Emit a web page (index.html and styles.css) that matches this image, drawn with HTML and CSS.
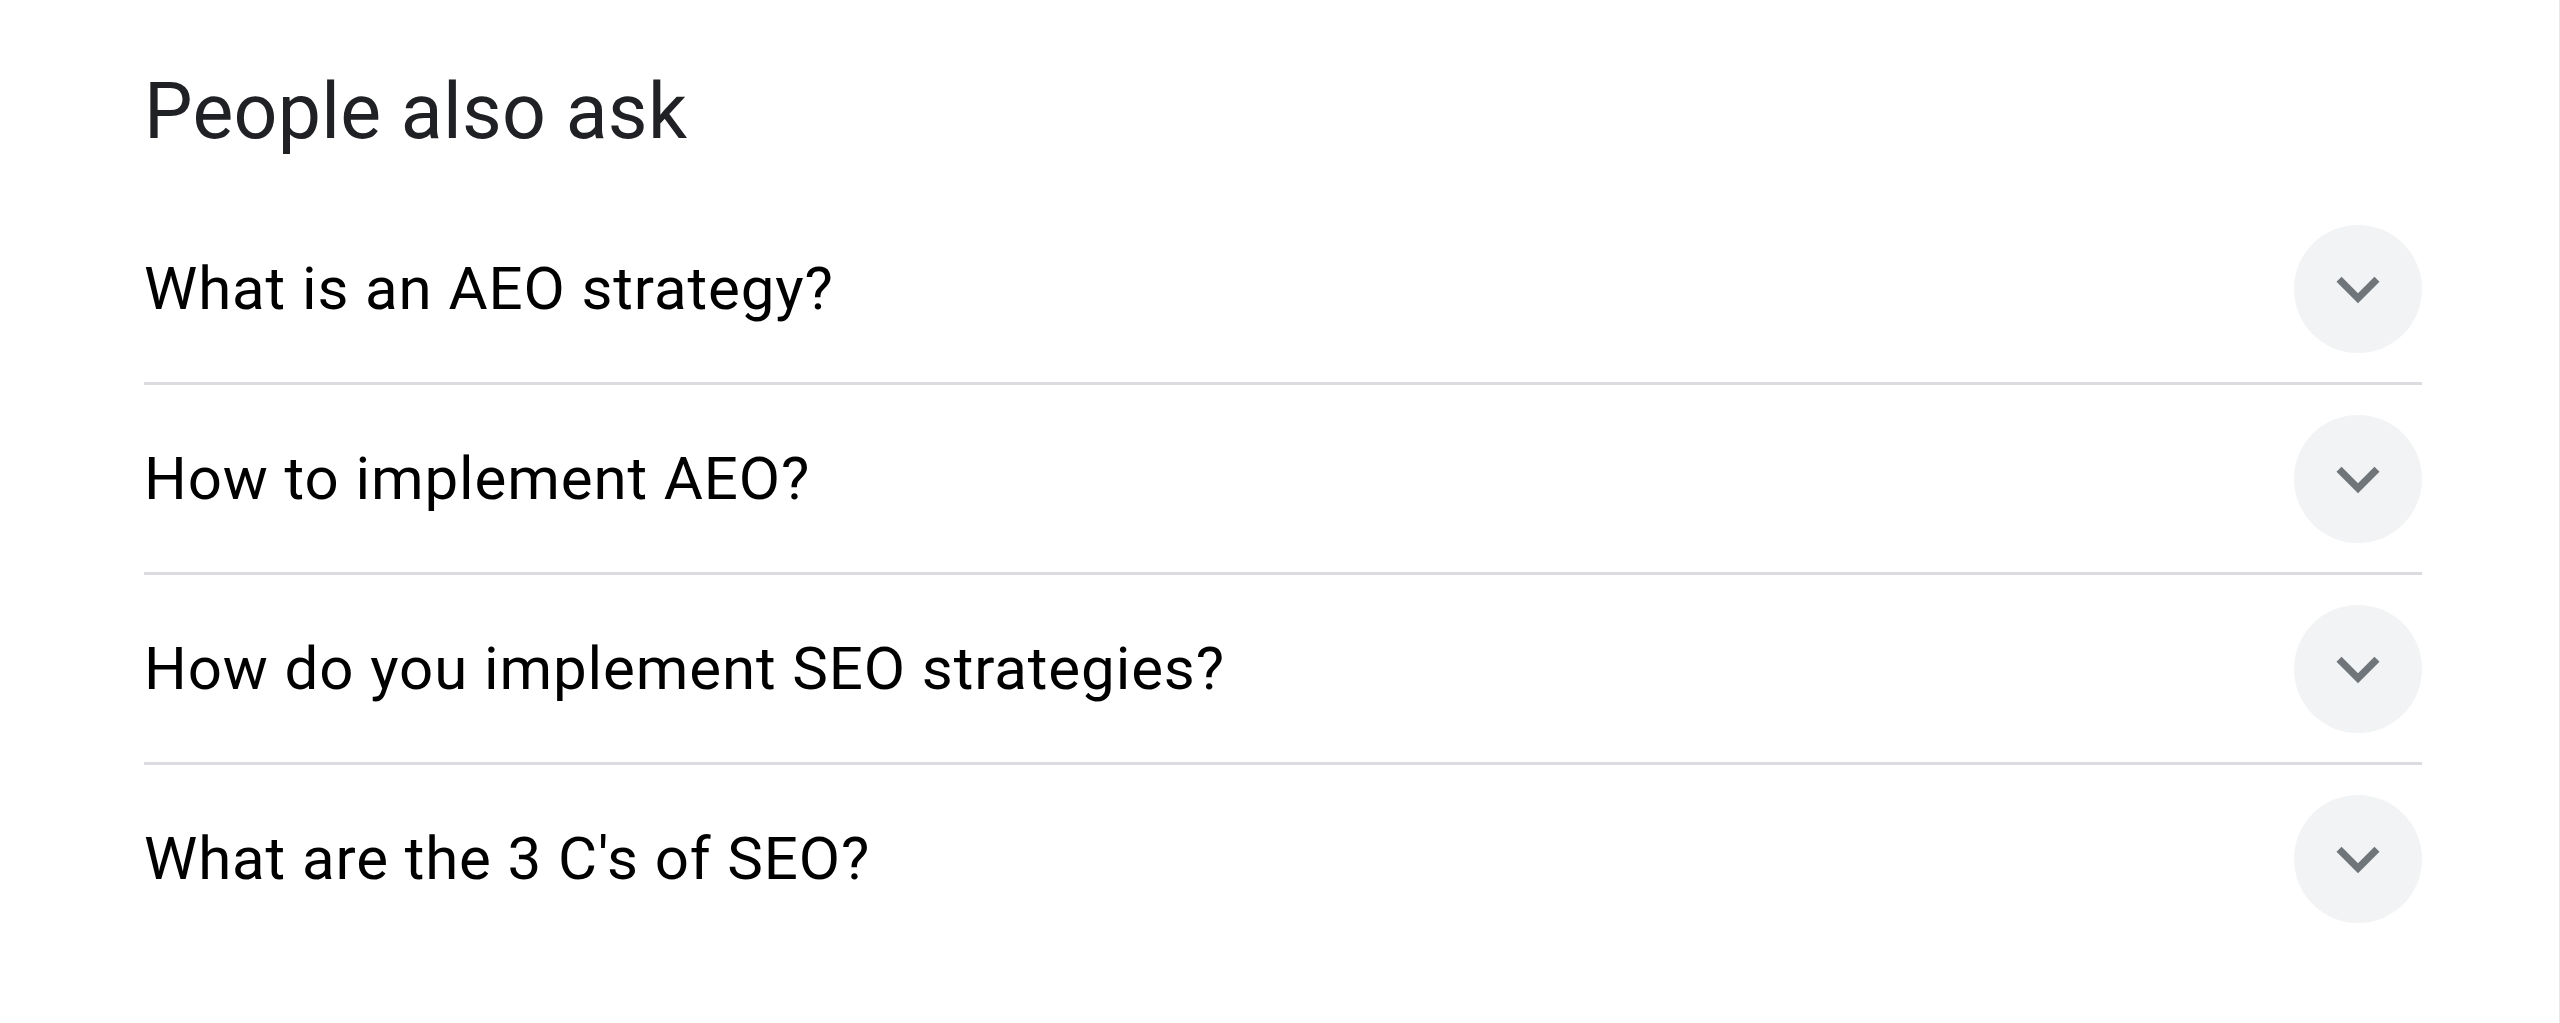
FILE: index.html
```html
<!DOCTYPE html>
<html lang="en">
<head>
    <meta charset="UTF-8">
    <meta name="viewport" content="width=device-width, initial-scale=1.0">
    <title>People also ask</title>
    <link rel="stylesheet" href="styles.css">
</head>
<body>
    <div class="paa">
        <h2 class="paa-title">People also ask</h2>
        <div class="paa-list">
            <div class="paa-row">
                <span class="paa-question">What is an AEO strategy?</span>
                <span class="paa-toggle">
                    <svg viewBox="0 0 24 24"><path d="M16.59 8.59L12 13.17 7.41 8.59 6 10l6 6 6-6z"/></svg>
                </span>
            </div>
            <div class="paa-row">
                <span class="paa-question">How to implement AEO?</span>
                <span class="paa-toggle">
                    <svg viewBox="0 0 24 24"><path d="M16.59 8.59L12 13.17 7.41 8.59 6 10l6 6 6-6z"/></svg>
                </span>
            </div>
            <div class="paa-row">
                <span class="paa-question">How do you implement SEO strategies?</span>
                <span class="paa-toggle">
                    <svg viewBox="0 0 24 24"><path d="M16.59 8.59L12 13.17 7.41 8.59 6 10l6 6 6-6z"/></svg>
                </span>
            </div>
            <div class="paa-row">
                <span class="paa-question">What are the 3 C's of SEO?</span>
                <span class="paa-toggle">
                    <svg viewBox="0 0 24 24"><path d="M16.59 8.59L12 13.17 7.41 8.59 6 10l6 6 6-6z"/></svg>
                </span>
            </div>
        </div>
    </div>
</body>
</html>
```

FILE: styles.css
```css
body {
    font-family: Roboto, "Liberation Sans", sans-serif;
    margin: 0;
    background: #fff;
    height: 1023px;
    border-right: 1px solid #e8e8e8;
    box-sizing: border-box;
}
.paa {
    width: 2278px;
    padding: 66px 0 0 144px;
}
.paa-title {
    margin: 0 0 37px;
    font-size: 77px;
    font-weight: 400;
    line-height: 1.2;
    letter-spacing: 0.3px;
    color: #202124;
}
.paa-row {
    display: flex;
    align-items: center;
    justify-content: space-between;
    height: 187px;
    border-bottom: 3px solid #dadce0;
}
.paa-row:last-child {
    border-bottom: none;
}
.paa-question {
    font-size: 60px;
    letter-spacing: 0.9px;
    color: #000;
}
.paa-toggle {
    width: 128px;
    height: 128px;
    border-radius: 50%;
    background: #f1f3f4;
    display: flex;
    align-items: center;
    justify-content: center;
}
.paa-toggle svg {
    width: 86px;
    height: 86px;
    fill: #70757a;
}
```
